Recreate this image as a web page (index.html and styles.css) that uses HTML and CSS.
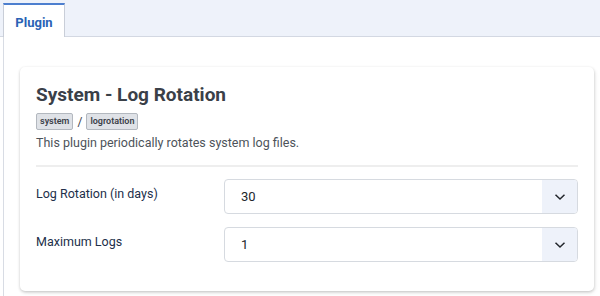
FILE: index.html
```html
<!DOCTYPE html>
<html>
<head>
<meta charset="utf-8">
<link rel="stylesheet" href="styles.css">
</head>
<body>
<div class="tabbar">
  <div class="tab">Plugin</div>
</div>
<div class="pane">
  <div class="card">
    <h2 class="title">System - Log Rotation</h2>
    <div class="badges">
      <span class="badge">system</span>
      <span class="sep">/</span>
      <span class="badge">logrotation</span>
    </div>
    <p class="desc">This plugin periodically rotates system log files.</p>
    <hr class="rule">
    <div class="field">
      <label class="label">Log Rotation (in days)</label>
      <div class="select">
        <span class="value">30</span>
        <span class="caret"><svg width="12" height="8" viewBox="0 0 12 8"><path d="M1.5 1.8 L6 6 L10.5 1.8" fill="none" stroke="#22262b" stroke-width="1.5"/></svg></span>
      </div>
    </div>
    <div class="field">
      <label class="label">Maximum Logs</label>
      <div class="select">
        <span class="value">1</span>
        <span class="caret"><svg width="12" height="8" viewBox="0 0 12 8"><path d="M1.5 1.8 L6 6 L10.5 1.8" fill="none" stroke="#22262b" stroke-width="1.5"/></svg></span>
      </div>
    </div>
  </div>
</div>
</body>
</html>
```
FILE: styles.css
```css
html, body {
  margin: 0;
  padding: 0;
  background: #ffffff;
  font-family: Roboto, "Noto Sans", sans-serif;
  width: 600px;
  height: 296px;
  overflow: hidden;
}
.tabbar {
  height: 36px;
  background: #eef2fa;
  border-bottom: 1px solid #d3d8e2;
  display: flex;
  align-items: flex-end;
  padding-left: 3px;
}
.tab {
  width: 60px;
  height: 30px;
  margin-bottom: -1px;
  background: #ffffff;
  border: 1px solid #c9ced8;
  border-top: 2px solid #4d7fcf;
  border-bottom: none;
  color: #2a62b5;
  font-weight: 700;
  font-size: 13px;
  display: flex;
  align-items: center;
  justify-content: center;
  padding-top: 2px;
  box-sizing: content-box;
}
.pane {
  box-sizing: border-box;
  margin-left: 3px;
  border-left: 1px solid #d8dce4;
  padding: 30px 6px 0 16px;
  height: 259px;
}
.card {
  width: 542px;
  background: #fff;
  border-radius: 5px;
  box-shadow: 0 1px 3px rgba(0,0,0,0.18), 1px 2px 4px rgba(0,0,0,0.08);
  padding: 16px 16px 29px 16px;
}
.title {
  margin: 0;
  font-size: 19px;
  font-weight: 700;
  color: #3a4048;
  line-height: 24px;
}
.badges {
  display: flex;
  align-items: center;
  gap: 4px;
  margin-top: 6px;
  height: 17px;
}
.badge {
  display: inline-block;
  background: #dfe2e7;
  border: 1px solid #b3b8bf;
  border-radius: 2px;
  font-size: 9px;
  font-weight: 600;
  color: #3c4149;
  padding: 0 3px;
  line-height: 15px;
}
.sep {
  font-size: 12px;
  color: #3c4149;
}
.desc {
  margin: 4px 0 0 0;
  font-size: 12.5px;
  line-height: 18px;
  color: #4d535a;
}
.rule {
  margin: 13px 0 12px 0;
  border: 0;
  border-top: 2px solid #eeeeee;
  height: 0;
}
.field {
  display: grid;
  grid-template-columns: 188px 1fr;
  margin-bottom: 13px;
}
.field:last-child {
  margin-bottom: 0;
}
.label {
  font-size: 12.5px;
  color: #22304a;
  line-height: 16px;
  padding-top: 7px;
}
.select {
  box-sizing: border-box;
  height: 35px;
  border: 1px solid #d6dae0;
  border-radius: 4px;
  display: flex;
  align-items: stretch;
  overflow: hidden;
}
.value {
  flex: 1;
  display: flex;
  align-items: center;
  padding-left: 16px;
  font-size: 13px;
  color: #22262b;
}
.caret {
  width: 35px;
  background: #eef2fa;
  display: flex;
  align-items: center;
  justify-content: center;
}
```
